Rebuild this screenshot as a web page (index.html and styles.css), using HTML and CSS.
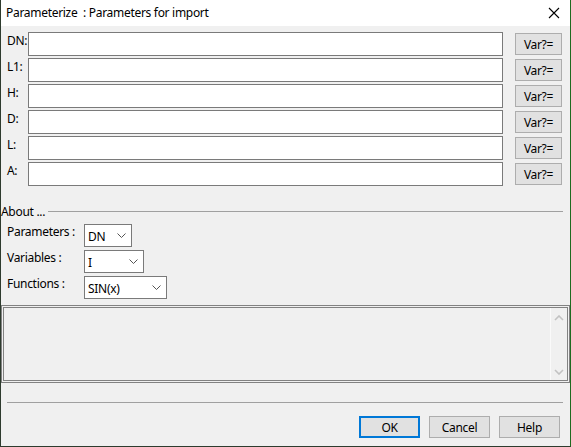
FILE: index.html
```html
<!DOCTYPE html>
<html>
<head>
    <title>Parameterize</title>
    <link rel="stylesheet" href="styles.css">
</head>
<body>
    <div class="window">
        <!-- Title bar -->
        <div class="titlebar">
            <span class="title">Parameterize&nbsp; : Parameters for import</span>
            <svg class="close" width="12" height="12" viewBox="0 0 12 12">
                <path d="M1,1 L11,11 M11,1 L1,11" stroke="#000" stroke-width="1.1" fill="none"/>
            </svg>
        </div>

        <!-- Parameter rows -->
        <div class="params">
            <div class="row"><label>DN:</label><div class="field"></div><button class="btn var">Var?=</button></div>
            <div class="row"><label>L1:</label><div class="field"></div><button class="btn var">Var?=</button></div>
            <div class="row"><label>H:</label><div class="field"></div><button class="btn var">Var?=</button></div>
            <div class="row"><label>D:</label><div class="field"></div><button class="btn var">Var?=</button></div>
            <div class="row"><label>L:</label><div class="field"></div><button class="btn var">Var?=</button></div>
            <div class="row"><label>A:</label><div class="field"></div><button class="btn var">Var?=</button></div>
        </div>

        <!-- About group -->
        <div class="group-head">
            <span>About ...</span>
            <div class="group-line"></div>
        </div>
        <div class="about">
            <span class="about-label">Parameters :</span>
            <div class="combo w-dn"><span>DN</span>
                <svg width="9" height="5" viewBox="0 0 9 5"><path d="M0.5,0.5 L4.5,4.5 L8.5,0.5" stroke="#555" fill="none"/></svg>
            </div>
            <span class="about-label">Variables :</span>
            <div class="combo w-var"><span>I</span>
                <svg width="9" height="5" viewBox="0 0 9 5"><path d="M0.5,0.5 L4.5,4.5 L8.5,0.5" stroke="#555" fill="none"/></svg>
            </div>
            <span class="about-label">Functions :</span>
            <div class="combo w-fn"><span>SIN(x)</span>
                <svg width="9" height="5" viewBox="0 0 9 5"><path d="M0.5,0.5 L4.5,4.5 L8.5,0.5" stroke="#555" fill="none"/></svg>
            </div>
        </div>

        <!-- Description box -->
        <div class="memo">
            <div class="memo-inner">
                <div class="memo-text"></div>
                <div class="scrollbar">
                    <svg width="10" height="6" viewBox="0 0 10 6"><path d="M1,5 L5,1 L9,5" stroke="#c2c2c2" stroke-width="1.6" fill="none"/></svg>
                    <svg width="10" height="6" viewBox="0 0 10 6"><path d="M1,1 L5,5 L9,1" stroke="#c2c2c2" stroke-width="1.6" fill="none"/></svg>
                </div>
            </div>
        </div>

        <div class="separator"></div>

        <!-- Dialog buttons -->
        <div class="actions">
            <button class="btn action default">OK</button>
            <button class="btn action">Cancel</button>
            <button class="btn action">Help</button>
        </div>
    </div>
</body>
</html>
```

FILE: styles.css
```css
body {
    margin: 0;
    background: #f0f0f0;
    font-family: "Noto Sans", "Liberation Sans", sans-serif;
    font-size: 12px;
    letter-spacing: -0.3px;
    color: #000;
}
.window {
    width: 571px;
    height: 447px;
    box-sizing: border-box;
    border: 1px solid #2e3b2e;
    border-top: none;
    border-right-color: #1f6a1f;
    background: #f0f0f0;
    display: flex;
    flex-direction: column;
}
.titlebar {
    height: 26px;
    background: #fff;
    display: flex;
    align-items: center;
    justify-content: space-between;
    padding: 0 10px 0 5px;
    flex-shrink: 0;
}
.title {
    line-height: 26px;
    margin-top: -1px;
}
.close {
    display: block;
}
.params {
    padding: 6px 8px 0 6px;
    display: flex;
    flex-direction: column;
    gap: 2px;
}
.row {
    display: flex;
    align-items: center;
    height: 24px;
}
.row label {
    width: 21px;
    align-self: flex-start;
    line-height: 16px;
    margin-top: 1px;
}
.field {
    flex: 1;
    height: 24px;
    box-sizing: border-box;
    border: 1px solid #7a7a7a;
    background: #fff;
}
.btn {
    font-family: inherit;
    font-size: 12px;
    letter-spacing: inherit;
    color: #000;
    background: #e1e1e1;
    border: 1px solid #adadad;
    padding: 0;
    box-sizing: border-box;
}
.var {
    width: 47px;
    height: 22px;
    margin-left: 12px;
}
.group-head {
    display: flex;
    align-items: center;
    margin-top: 18px;
    padding-right: 7px;
    height: 14px;
}
.group-line {
    flex: 1;
    margin-left: 3px;
    border-top: 1px solid #a0a0a0;
}
.about {
    display: grid;
    grid-template-columns: 77px auto;
    justify-content: start;
    row-gap: 3px;
    padding-left: 6px;
    margin-top: 6px;
}
.about-label {
    line-height: 16px;
}
.combo {
    height: 23px;
    box-sizing: border-box;
    border: 1px solid #7a7a7a;
    background: #fff;
    display: flex;
    align-items: center;
    justify-content: space-between;
    padding: 0 5px 0 3px;
}
.combo span {
    margin-top: 1px;
}
.w-dn { width: 48px; }
.w-var { width: 60px; }
.w-fn { width: 83px; }
.memo {
    margin-top: 6px;
    height: 78px;
    box-sizing: border-box;
    border: 1px solid #828282;
    padding: 1px;
}
.memo-inner {
    height: 100%;
    box-sizing: border-box;
    border: 1px solid #828282;
    display: flex;
}
.memo-text {
    flex: 1;
}
.scrollbar {
    width: 16px;
    border-left: 1px solid #fafafa;
    display: flex;
    flex-direction: column;
    align-items: center;
    justify-content: space-between;
    padding: 7px 0 5px;
}
.scrollbar svg {
    display: block;
}
.separator {
    margin: 19px 7px 0 6px;
    border-top: 1px solid #a0a0a0;
}
.actions {
    display: flex;
    justify-content: flex-end;
    gap: 9px;
    padding-right: 10px;
    margin-top: 13px;
}
.action {
    width: 61px;
    height: 22px;
}
.default {
    border: 2px solid #0078d7;
}
```
